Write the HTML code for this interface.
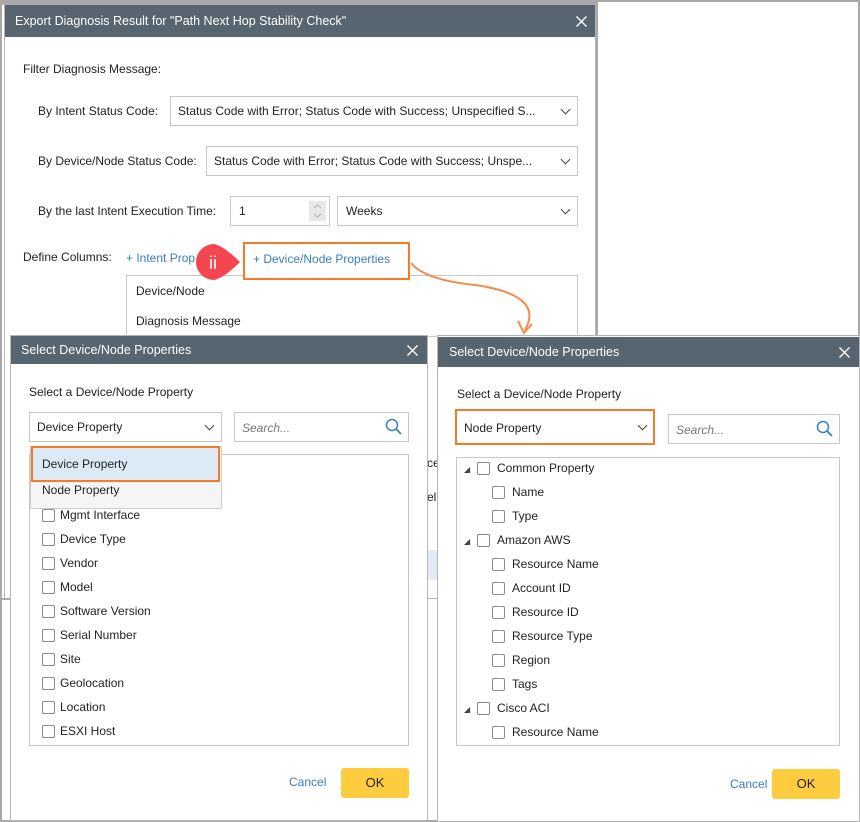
<!DOCTYPE html>
<html><head><meta charset="utf-8">
<style>
*{box-sizing:border-box;margin:0;padding:0}
body{width:860px;height:822px;position:relative;background:#fff;font-family:"Liberation Sans",sans-serif;font-size:12px;color:#222;overflow:hidden}
.a{position:absolute}
.frame{left:0;top:0;width:860px;height:822px;border:2px solid #a9a9a9}
.hdr{background:#56656f;color:#fff;font-size:12.5px}
.box{border:1px solid #c8c8c8;background:#fff}
.chev{position:absolute;width:7px;height:7px;border-right:1.3px solid #444;border-bottom:1.3px solid #444;transform:rotate(45deg)}
.cb{position:absolute;width:13px;height:13px;border:1px solid #8a8a96;border-radius:2px;background:#fff}
.t{position:absolute;white-space:nowrap}
.x{position:absolute}
.blue{color:#3a7cc0}
</style></head><body>
<div class="a frame"></div>
<div class="a" style="left:2px;top:2px;width:595px;height:3px;background:#a9a9a9"></div>
<div class="a" style="left:595px;top:2px;width:3px;height:600px;background:#a9a9a9"></div>
<div class="a" style="left:4px;top:5px;width:592px;height:594px;border:1px solid #b5b5b5;background:#fff"></div>
<div class="a hdr" style="left:5px;top:5px;width:590px;height:32px"><span class="t" style="left:10px;top:9px">Export Diagnosis Result for "Path Next Hop Stability Check"</span><svg class="x" style="left:571px;top:11px" width="11" height="11"><path d="M0.5 0.5L10.5 10.5M10.5 0.5L0.5 10.5" stroke="#fff" stroke-width="1.4"/></svg></div>
<span class="t" style="left:23px;top:62px">Filter Diagnosis Message:</span>
<span class="t" style="left:38px;top:104px">By Intent Status Code:</span>
<div class="a box" style="left:170px;top:96px;width:408px;height:30px"><span class="t" style="left:7px;top:7px">Status Code with Error; Status Code with Success; Unspecified S...</span><i class="chev" style="left:391px;top:9px"></i></div>
<span class="t" style="left:38px;top:154px">By Device/Node Status Code:</span>
<div class="a box" style="left:206px;top:146px;width:372px;height:30px"><span class="t" style="left:7px;top:7px">Status Code with Error; Status Code with Success; Unspe...</span><i class="chev" style="left:355px;top:9px"></i></div>
<span class="t" style="left:38px;top:204px">By the last Intent Execution Time:</span>
<div class="a box" style="left:230px;top:196px;width:100px;height:30px"><span class="t" style="left:8px;top:7px">1</span><div class="a" style="left:78px;top:4px;width:17px;height:20px;background:#e8e8e8"><svg width="17" height="20"><path d="M5 7L8.5 4L12 7M5 13L8.5 16L12 13" fill="none" stroke="#aaa" stroke-width="1"/></svg></div></div>
<div class="a box" style="left:337px;top:196px;width:241px;height:30px"><span class="t" style="left:8px;top:7px">Weeks</span><i class="chev" style="left:224px;top:9px"></i></div>
<span class="t" style="left:23px;top:250px">Define Columns:</span>
<span class="t blue" style="left:126px;top:251px">+ Intent Prop</span>
<div class="a box" style="left:126px;top:275px;width:452px;height:62px"><span class="t" style="left:9px;top:8px">Device/Node</span><span class="t" style="left:9px;top:38px">Diagnosis Message</span></div>
<div class="a" style="left:243px;top:242px;width:167px;height:38px;border:2.5px solid #f57a2a;background:#fff"><span class="t blue" style="left:8px;top:8px">+ Device/Node Properties</span></div>
<svg class="a" style="left:190px;top:240px" width="60" height="45"><path d="M24 4 A18 18 0 1 0 24 40 Q34 38 50 22 Q34 6 24 4Z" fill="#f44550"/><text x="19" y="29" fill="#fff" font-family="Liberation Sans" font-size="18">ii</text></svg>
<svg class="a" style="left:405px;top:255px" width="140" height="85"><path d="M6 8 Q20 25 70 30 Q140 40 120 75" fill="none" stroke="#f58a4a" stroke-width="2"/><path d="M113 66 L119 78 L127 69" fill="none" stroke="#f58a4a" stroke-width="2"/></svg>
<div class="a" style="left:427px;top:550px;width:10px;height:30px;background:#e3ebf7"></div>
<span class="t" style="left:427px;top:456px">ce</span>
<span class="t" style="left:427px;top:490px">el</span>
<div class="a" style="left:0;top:598px;width:12px;height:2px;background:#a9a9a9"></div>
<!-- left dialog -->
<div class="a" style="left:10px;top:335px;width:418px;height:486px;border:1px solid #b5b5b5;background:#fff"></div>
<div class="a hdr" style="left:11px;top:336px;width:416px;height:28px"><span class="t" style="left:10px;top:7px">Select Device/Node Properties</span><svg class="x" style="left:396px;top:9px" width="11" height="11"><path d="M0.5 0.5L10.5 10.5M10.5 0.5L0.5 10.5" stroke="#fff" stroke-width="1.4"/></svg></div>
<span class="t" style="left:29px;top:385px">Select a Device/Node Property</span>
<div class="a box" style="left:29px;top:412px;width:193px;height:30px"><span class="t" style="left:7px;top:7px">Device Property</span><i class="chev" style="left:176px;top:9px"></i></div>
<div class="a box" style="left:234px;top:412px;width:175px;height:30px"><span class="t" style="left:7px;top:8px;font-style:italic;color:#777">Search...</span>
<svg class="a" style="left:150px;top:5px" width="18" height="18"><circle cx="7" cy="7" r="5.5" fill="none" stroke="#3a7cc0" stroke-width="1.5"/><path d="M11 11 L16 16" stroke="#3a7cc0" stroke-width="1.8"/></svg></div>
<div class="a box" style="left:29px;top:454px;width:380px;height:292px"></div>
<div class="a" style="left:30px;top:446px;width:192px;height:63px;border:1px solid #ccc;background:#f5f5f5;border-radius:2px"></div>
<div class="a" style="left:31px;top:446px;width:189px;height:36px;border:2.5px solid #f57a2a;background:#dbeaf5"><span class="t" style="left:9px;top:9px">Device Property</span></div>
<span class="t" style="left:42px;top:483px">Node Property</span>
<div class="cb" style="left:42px;top:509px"></div><span class="t" style="left:60px;top:508px">Mgmt Interface</span>
<div class="cb" style="left:42px;top:533px"></div><span class="t" style="left:60px;top:532px">Device Type</span>
<div class="cb" style="left:42px;top:557px"></div><span class="t" style="left:60px;top:556px">Vendor</span>
<div class="cb" style="left:42px;top:581px"></div><span class="t" style="left:60px;top:580px">Model</span>
<div class="cb" style="left:42px;top:605px"></div><span class="t" style="left:60px;top:604px">Software Version</span>
<div class="cb" style="left:42px;top:629px"></div><span class="t" style="left:60px;top:628px">Serial Number</span>
<div class="cb" style="left:42px;top:653px"></div><span class="t" style="left:60px;top:652px">Site</span>
<div class="cb" style="left:42px;top:677px"></div><span class="t" style="left:60px;top:676px">Geolocation</span>
<div class="cb" style="left:42px;top:701px"></div><span class="t" style="left:60px;top:700px">Location</span>
<div class="cb" style="left:42px;top:725px"></div><span class="t" style="left:60px;top:724px">ESXI Host</span>
<span class="t blue" style="left:289px;top:775px">Cancel</span>
<div class="a" style="left:341px;top:768px;width:68px;height:30px;background:#ffcc40;border-radius:3px;text-align:center;line-height:30px;font-size:13px">OK</div>
<!-- right dialog -->
<div class="a" style="left:437px;top:335px;width:423px;height:487px;border:1px solid #b5b5b5;background:#fff"></div>
<div class="a hdr" style="left:438px;top:337px;width:421px;height:30px"><span class="t" style="left:11px;top:8px">Select Device/Node Properties</span><svg class="x" style="left:401px;top:10px" width="11" height="11"><path d="M0.5 0.5L10.5 10.5M10.5 0.5L0.5 10.5" stroke="#fff" stroke-width="1.4"/></svg></div>
<span class="t" style="left:457px;top:387px">Select a Device/Node Property</span>
<div class="a" style="left:455px;top:409px;width:200px;height:36px;border:2.5px solid #f57a2a;background:#fff"><span class="t" style="left:7px;top:10px">Node Property</span><i class="chev" style="left:182px;top:11px"></i></div>
<div class="a box" style="left:668px;top:414px;width:172px;height:30px"><span class="t" style="left:7px;top:8px;font-style:italic;color:#777">Search...</span>
<svg class="a" style="left:147px;top:5px" width="18" height="18"><circle cx="7" cy="7" r="5.5" fill="none" stroke="#3a7cc0" stroke-width="1.5"/><path d="M11 11 L16 16" stroke="#3a7cc0" stroke-width="1.8"/></svg></div>
<div class="a box" style="left:456px;top:457px;width:384px;height:289px"></div>
<span class="t" style="left:464px;top:465px;font-size:8px;color:#444">◢</span><div class="cb" style="left:477px;top:462px"></div><span class="t" style="left:497px;top:461px">Common Property</span>
<div class="cb" style="left:492px;top:486px"></div><span class="t" style="left:512px;top:485px">Name</span>
<div class="cb" style="left:492px;top:510px"></div><span class="t" style="left:512px;top:509px">Type</span>
<span class="t" style="left:464px;top:537px;font-size:8px;color:#444">◢</span><div class="cb" style="left:477px;top:534px"></div><span class="t" style="left:497px;top:533px">Amazon AWS</span>
<div class="cb" style="left:492px;top:558px"></div><span class="t" style="left:512px;top:557px">Resource Name</span>
<div class="cb" style="left:492px;top:582px"></div><span class="t" style="left:512px;top:581px">Account ID</span>
<div class="cb" style="left:492px;top:606px"></div><span class="t" style="left:512px;top:605px">Resource ID</span>
<div class="cb" style="left:492px;top:630px"></div><span class="t" style="left:512px;top:629px">Resource Type</span>
<div class="cb" style="left:492px;top:654px"></div><span class="t" style="left:512px;top:653px">Region</span>
<div class="cb" style="left:492px;top:678px"></div><span class="t" style="left:512px;top:677px">Tags</span>
<span class="t" style="left:464px;top:705px;font-size:8px;color:#444">◢</span><div class="cb" style="left:477px;top:702px"></div><span class="t" style="left:497px;top:701px">Cisco ACI</span>
<div class="cb" style="left:492px;top:726px"></div><span class="t" style="left:512px;top:725px">Resource Name</span>
<span class="t blue" style="left:730px;top:777px">Cancel</span>
<div class="a" style="left:772px;top:769px;width:68px;height:30px;background:#ffcc40;border-radius:3px;text-align:center;line-height:30px;font-size:13px">OK</div>
</body></html>
